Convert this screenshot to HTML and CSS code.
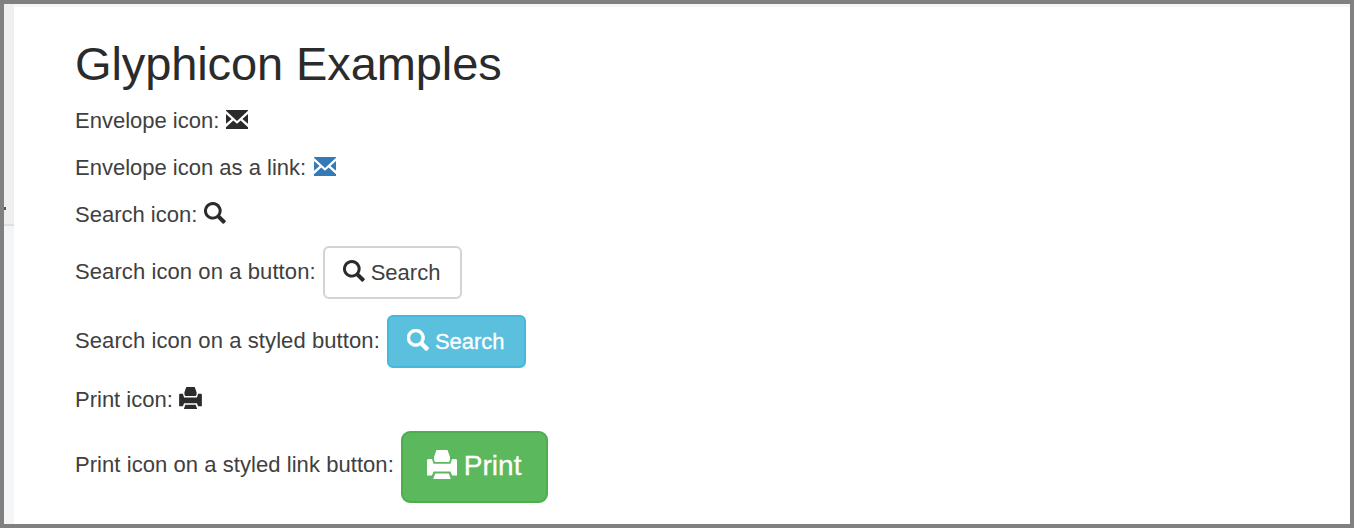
FILE: index.html
```html
<!DOCTYPE html>
<html lang="en">
<head>
<meta charset="utf-8">
<title>Glyphicon Examples</title>
<link rel="stylesheet" href="styles.css">
</head>
<body>
<svg class="defs" width="0" height="0" aria-hidden="true">
  <symbol id="envelope" viewBox="0 0 22 19"><path d="M0 0H22V.8L11 10.9 0 .8ZM0 4 5.6 9 0 13.8ZM22 4V13.8L16.4 9ZM7.3 10.6 11 13.8 14.7 10.6 22 17.2V19H0V17.2Z"/></symbol>
  <symbol id="search" viewBox="0 0 22 22"><path fill-rule="evenodd" d="M8.8 0a8.8 8.8 0 1 0 4.6 16.3l5.2 5.1q.7.6 1.4 0l1.5-1.5q.7-.7 0-1.4l-5.2-5.1A8.8 8.8 0 0 0 8.8 0Zm0 2.9a5.9 5.9 0 1 1 0 11.8 5.9 5.9 0 0 1 0-11.8Z"/></symbol>
  <symbol id="print" viewBox="0 0 30 29"><path d="M9.5 0H20.5L23 7V10L22 12H8L7 10V7ZM1 9H5L6.5 13.8H23.5L25 9H29L30 10V25.5H25L23.5 21.5H6.5L5 25.5H0V10ZM8.2 23.5H21.8L23.8 29H6.2Z"/></symbol>
</svg>
<aside class="rail"><div class="rail-top"><span class="rail-mark"></span></div></aside>
<main class="content">
  <h2 class="title">Glyphicon Examples</h2>
  <p class="row">Envelope icon: <svg class="icon envelope"><use href="#envelope"/></svg></p>
  <p class="row">Envelope icon as a link: <a class="link"><svg class="icon envelope"><use href="#envelope"/></svg></a></p>
  <p class="row">Search icon: <svg class="icon search"><use href="#search"/></svg></p>
  <p class="row row-button"><span class="label">Search icon on a button:</span> <button class="btn btn-default"><svg class="icon search"><use href="#search"/></svg>Search</button></p>
  <p class="row row-button"><span class="label">Search icon on a styled button:</span> <button class="btn btn-info"><svg class="icon search"><use href="#search"/></svg>Search</button></p>
  <p class="row">Print icon: <svg class="icon print"><use href="#print"/></svg></p>
  <p class="row row-large"><span class="label">Print icon on a styled link button:</span> <a class="btn btn-success"><svg class="icon print"><use href="#print"/></svg><span class="btn-text">Print</span></a></p>
</main>
</body>
</html>
```
FILE: styles.css
```css
* { box-sizing: border-box; }
body {
  margin: 0;
  height: 528px;
  display: flex;
  overflow: hidden;
  border: 4px solid #808080;
  background: #fff;
  color: #404040;
  font: 22px/31px "Liberation Sans", Arial, sans-serif;
}
.defs { position: absolute; }
.rail { width: 10px; flex: none; background: #f3f5f7; }
.rail-top {
  height: 222px;
  padding-top: 203px;
  background: #efefef;
  border-bottom: 2px solid #dae1e1;
}
.rail-mark {
  display: block;
  width: 2px;
  height: 3px;
  background: #555;
}
.content {
  flex: 1;
  padding: 31px 0 0 61px;
  border-top: 3px solid #f5f5f5;
}
.title {
  margin: 0 0 16px;
  color: #2b2b2b;
  font-size: 47px;
  font-weight: 400;
  line-height: 51px;
  letter-spacing: -0.1px;
}
.row {
  display: flex;
  align-items: center;
  height: 31px;
  margin: 0 0 16px;
  gap: 7px;
  white-space: nowrap;
}
.row-button { height: 53px; }
.row-large { height: 72px; }
.label { padding-bottom: 3px; letter-spacing: 0.09px; }
.row-large .label { padding-bottom: 5px; letter-spacing: 0.06px; }
.icon { display: block; flex: none; fill: #2b2b2b; width: 22px; height: 22px; }
.envelope { height: 19px; margin-top: -3px; }
.search { margin-top: -3px; }
.print { width: 23px; margin: -3px 0 0 -1px; }
.link .icon { fill: #337ab7; margin-left: 1px; }
.btn {
  display: flex;
  align-items: center;
  gap: 6px;
  width: 139px;
  height: 53px;
  padding: 0 0 0 18px;
  border: 2px solid #d3d3d3;
  border-radius: 6px;
  background: #fff;
  color: #404040;
  font: inherit;
}
.btn-info { background: #5bc0de; border-color: #46b8da; color: #fff; }
.btn-success {
  width: 147px;
  height: 72px;
  gap: 7px;
  padding-left: 24px;
  border-radius: 9px;
  border-color: #4cae4c;
  background: #5cb85c;
  color: #fff;
  font-size: 28px;
}
.btn-text { padding-bottom: 3px; }
.btn-info, .btn-success { -webkit-text-stroke: 0.3px #fff; }
.btn-info .icon, .btn-success .icon { fill: #fff; }
.btn-info .icon { stroke: #fff; stroke-width: 0.5px; }
.btn-success .icon { width: 30px; height: 29px; margin: -6px 0 0; }
```
